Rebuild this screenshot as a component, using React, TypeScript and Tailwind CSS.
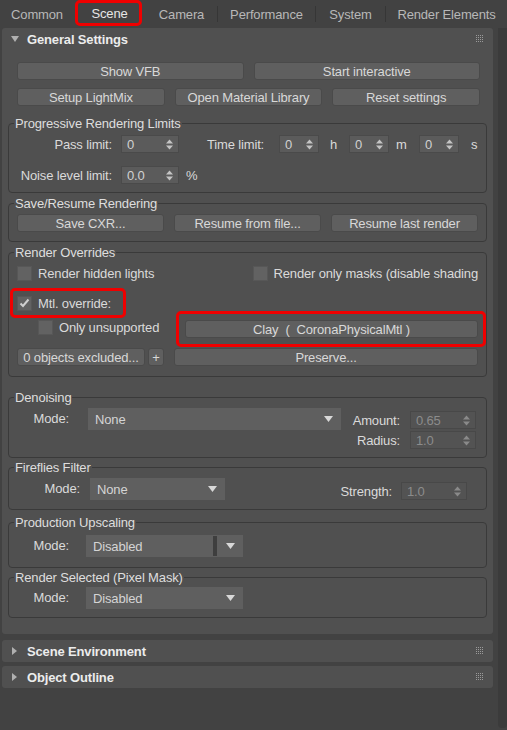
import React from 'react';

const Grip = () => (
    <svg width="8" height="8" viewBox="0 0 8 8" className="shrink-0">
        {[0, 2, 4, 6].map((y) =>
            [0, 2, 4, 6].map((x) => <rect key={`${x}-${y}`} x={x} y={y} width="1" height="1" fill="#9a9a9a" />)
        )}
    </svg>
);

const SpinArrows = ({ dim }: { dim?: boolean }) => (
    <svg width="7" height="11" viewBox="0 0 7 11" className="shrink-0">
        <polygon points="0,4.5 3.5,0.5 7,4.5" fill={dim ? '#8a8a8a' : '#c4c4c4'} />
        <polygon points="0,6.5 3.5,10.5 7,6.5" fill={dim ? '#8a8a8a' : '#c4c4c4'} />
    </svg>
);

const Spinner = ({ value, className, dim }: { value: string; className: string; dim?: boolean }) => (
    <div
        className={`flex h-[18px] items-center border pl-[5px] pr-[5px] ${
            dim ? 'border-[#484848] bg-[#535353] text-[#8c8c8c]' : 'border-[#4a4a4a] bg-[#5b5b5b] text-[#d2d2d2]'
        } ${className}`}
    >
        <span className="flex-1 leading-none">{value}</span>
        <SpinArrows dim={dim} />
    </div>
);

const DownTri = () => (
    <svg width="9" height="6" viewBox="0 0 9 6" className="shrink-0">
        <polygon points="0,0 9,0 4.5,6" fill="#d8d8d8" />
    </svg>
);

const Dropdown = ({ value, className, split }: { value: string; className: string; split?: boolean }) => (
    <div className={`flex h-[22px] items-center bg-[#5f5f5f] pl-[7px] text-[#d4d4d4] ${className}`}>
        <span className="flex-1">{value}</span>
        {split && <div className="mr-[9px] h-[20px] w-[4px] bg-[#3e3e3e]" />}
        <div className="pr-[8px]">
            <DownTri />
        </div>
    </div>
);

const Button = ({ label, className }: { label: string; className?: string }) => (
    <div
        className={`flex h-[18px] items-center justify-center rounded-[3px] border border-[#4a4a4a] bg-[#5f5f5f] text-[#d8d8d8] ${className ?? ''}`}
    >
        {label}
    </div>
);

const Check = ({ checked }: { checked?: boolean }) => (
    <div className="flex h-[15px] w-[15px] shrink-0 items-center justify-center border border-[#575757] bg-[#626262]">
        {checked && (
            <svg width="11" height="10" viewBox="0 0 11 10">
                <path d="M1.5 5.5 L4 8 L9.5 1.5" stroke="#cfcfcf" strokeWidth="2" fill="none" />
            </svg>
        )}
    </div>
);

const Group = ({ title, className, children }: { title: string; className: string; children: React.ReactNode }) => (
    <fieldset className={`mx-[6px] rounded-[4px] border border-[#3a3a3a] ${className}`}>
        <legend className="ml-[5px] px-[1px] text-[13px] leading-[15px] text-[#dedede]">{title}</legend>
        {children}
    </fieldset>
);

const Rollout = ({ title, className }: { title: string; className: string }) => (
    <div className={`mx-[2px] flex h-[22px] w-[491px] items-center rounded-[3px] bg-[#505050] pl-[10px] pr-[9px] ${className}`}>
        <svg width="5" height="8" viewBox="0 0 5 8" className="shrink-0">
            <polygon points="0,0 5,4 0,8" fill="#b0b0b0" />
        </svg>
        <span className="ml-[10px] flex-1 font-bold text-[#ececec]">{title}</span>
        <Grip />
    </div>
);

export default function App() {
    return (
        <div className="relative h-[730px] w-[507px] overflow-hidden bg-[#424242] font-['Liberation_Sans',Arial,sans-serif] text-[13px] leading-[15px] tracking-[-0.15px] text-[#dadada]">
            {/* Tabs */}
            <div className="flex h-[28px] items-start text-[#b8b8b8]">
                <div className="flex h-[28px] w-[74px] items-center justify-center">Common</div>
                <div className="ml-[1px] flex h-[26px] w-[67px] items-center justify-center rounded-[5px] border-[3px] border-[#f00000] pl-[2px] text-[#e6e6e6]">
                    Scene
                </div>
                <div className="ml-[4px] flex h-[28px] w-[71px] items-center justify-center">Camera</div>
                <div className="flex h-[28px] w-[98px] items-center">
                    <div className="h-[16px] w-px bg-[#363636]" />
                    <span className="flex-1 text-center">Performance</span>
                </div>
                <div className="flex h-[28px] w-[70px] items-center">
                    <div className="h-[16px] w-px bg-[#363636]" />
                    <span className="flex-1 text-center">System</span>
                </div>
                <div className="flex h-[28px] w-[122px] items-center">
                    <div className="h-[16px] w-px bg-[#363636]" />
                    <span className="flex-1 text-center">Render Elements</span>
                </div>
            </div>

            <div className="flex">
                <div className="w-[497px]">
                    {/* General Settings */}
                    <div className="mx-[2px] w-[491px] rounded-[3px] bg-[#505050] pb-[16px]">
                        <div className="flex h-[22px] items-center pl-[9px] pr-[9px]">
                            <svg width="8" height="6" viewBox="0 0 8 6" className="shrink-0">
                                <polygon points="0,0 8,0 4,6" fill="#b0b0b0" />
                            </svg>
                            <span className="ml-[8px] flex-1 font-bold text-[#ececec]">General Settings</span>
                            <Grip />
                        </div>

                        <div className="mt-[12px] grid grid-cols-2 gap-[10px] pl-[15px] pr-[13px]">
                            <Button label="Show VFB" />
                            <Button label="Start interactive" />
                        </div>
                        <div className="mt-[8px] grid grid-cols-3 gap-[10px] pl-[15px] pr-[13px]">
                            <Button label="Setup LightMix" />
                            <Button label="Open Material Library" />
                            <Button label="Reset settings" />
                        </div>

                        <Group title="Progressive Rendering Limits" className="mt-[10px] pb-[8px] pt-[4px]">
                            <div className="flex items-center">
                                <span className="w-[103px] text-right">Pass limit:</span>
                                <Spinner value="0" className="ml-[9px] w-[58px]" />
                                <span className="ml-[28px] w-[72px]">Time limit:</span>
                                <Spinner value="0" className="w-[40px]" />
                                <span className="w-[30px] pl-[11px]">h</span>
                                <Spinner value="0" className="w-[40px]" />
                                <span className="w-[30px] pl-[7px]">m</span>
                                <Spinner value="0" className="w-[40px]" />
                                <span className="pl-[12px]">s</span>
                            </div>
                            <div className="mt-[13px] flex items-center">
                                <span className="w-[103px] text-right">Noise level limit:</span>
                                <Spinner value="0.0" className="ml-[9px] w-[58px]" />
                                <span className="ml-[7px]">%</span>
                            </div>
                        </Group>

                        <Group title="Save/Resume Rendering" className="mt-[3px] pb-[9px] pt-[3px]">
                            <div className="grid grid-cols-3 gap-[10px] px-[8px]">
                                <Button label="Save CXR..." />
                                <Button label="Resume from file..." />
                                <Button label="Resume last render" />
                            </div>
                        </Group>

                        <Group title="Render Overrides" className="mt-[3px] pb-[10px] pt-[6px]">
                            <div className="grid grid-cols-2 gap-[10px] px-[8px]">
                                <div className="flex items-center gap-[6px] whitespace-nowrap">
                                    <Check />
                                    <span>Render hidden lights</span>
                                </div>
                                <div className="flex items-center gap-[6px] overflow-hidden whitespace-nowrap">
                                    <Check />
                                    <span>Render only masks (disable shading)</span>
                                </div>
                            </div>
                            <div className="mt-[7px] flex items-start">
                                <div className="ml-[1px] w-[116px]">
                                    <div className="flex h-[30px] items-center gap-[6px] rounded-[5px] border-[3px] border-[#f00000] pl-[4px]">
                                        <Check checked />
                                        <span>Mtl. override:</span>
                                    </div>
                                    <div className="ml-[28px] mt-[2px] flex items-center gap-[6px] whitespace-nowrap">
                                        <Check />
                                        <span>Only unsupported</span>
                                    </div>
                                </div>
                                <div className="ml-auto mt-[23px] flex h-[36px] w-[310px] items-center rounded-[5px] border-[3px] border-[#f00000] pl-[6px] pr-[5px]">
                                    <Button label="Clay  (  CoronaPhysicalMtl )" className="w-full whitespace-pre" />
                                </div>
                            </div>
                            <div className="mt-[1px] flex px-[8px]">
                                <Button label="0 objects excluded..." className="w-[128px]" />
                                <Button label="+" className="ml-[3px] w-[16px]" />
                                <Button label="Preserve..." className="ml-[10px] flex-1" />
                            </div>
                        </Group>

                        <Group title="Denoising" className="mt-[13px] pb-[8px] pt-[3px]">
                            <div className="flex items-start">
                                <span className="w-[60px] text-right leading-[22px]">Mode:</span>
                                <Dropdown value="None" className="ml-[19px] w-[253px]" />
                                <div className="ml-auto mt-[3px] flex flex-col gap-[2px] pr-[10px]">
                                    <div className="flex items-center">
                                        <span className="w-[50px] text-right">Amount:</span>
                                        <Spinner value="0.65" dim className="ml-[10px] w-[66px]" />
                                    </div>
                                    <div className="flex items-center">
                                        <span className="w-[50px] text-right">Radius:</span>
                                        <Spinner value="1.0" dim className="ml-[10px] w-[66px]" />
                                    </div>
                                </div>
                            </div>
                        </Group>

                        <Group title="Fireflies Filter" className="mt-[2px] pb-[9px] pt-[3px]">
                            <div className="flex items-start">
                                <span className="w-[71px] text-right leading-[22px]">Mode:</span>
                                <Dropdown value="None" className="ml-[10px] w-[135px]" />
                                <div className="ml-auto mt-[4px] flex items-center pr-[19px]">
                                    <span>Strength:</span>
                                    <Spinner value="1.0" dim className="ml-[9px] w-[66px]" />
                                </div>
                            </div>
                        </Group>

                        <Group title="Production Upscaling" className="mt-[5px] pb-[10px] pt-[5px]">
                            <div className="flex items-start">
                                <span className="w-[60px] text-right leading-[22px]">Mode:</span>
                                <Dropdown value="Disabled" split className="ml-[17px] w-[157px]" />
                            </div>
                        </Group>

                        <Group title="Render Selected (Pixel Mask)" className="mt-[2px] pb-[8px] pt-[2px]">
                            <div className="flex items-start">
                                <span className="w-[60px] text-right leading-[22px]">Mode:</span>
                                <Dropdown value="Disabled" className="ml-[17px] w-[157px]" />
                            </div>
                        </Group>
                    </div>

                    <Rollout title="Scene Environment" className="mt-[6px]" />
                    <Rollout title="Object Outline" className="mt-[4px]" />
                </div>

                {/* scroll track */}
                <div className="ml-[1px] h-[700px] w-[9px] rounded-b-[4px] bg-[#3b3b3b]" />
            </div>
        </div>
    );
}
